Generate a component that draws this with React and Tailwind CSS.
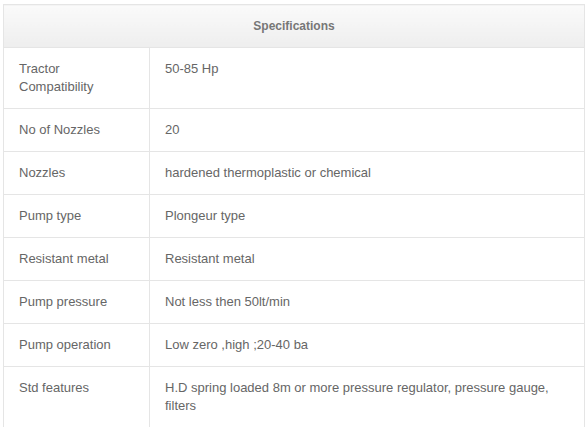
import React from 'react';

const specs = [
  ['Tractor Compatibility', '50-85 Hp'],
  ['No of Nozzles', '20'],
  ['Nozzles', 'hardened thermoplastic or chemical'],
  ['Pump type', 'Plongeur type'],
  ['Resistant metal', 'Resistant metal'],
  ['Pump pressure', 'Not less then 50lt/min'],
  ['Pump operation', 'Low zero ,high ;20-40 ba'],
  ['Std features', 'H.D spring loaded 8m or more pressure regulator, pressure gauge, filters'],
];

export default function App() {
  return (
    <div className="min-h-screen bg-white pt-[4px] pl-[3px] font-['Liberation_Sans',Arial,sans-serif]">
      <table className="w-[582px] border-collapse text-[13px] leading-[18px] text-[#666]">
        <thead>
          <tr>
            <th
              colSpan={2}
              className="h-[43px] border border-[#e5e5e5] bg-gradient-to-b from-[#fafafa] to-[#eeeeee] text-center text-[12px] font-bold text-[#777]"
            >
              Specifications
            </th>
          </tr>
        </thead>
        <tbody>
          {specs.map(([label, value]) => (
            <tr key={label}>
              <td className="w-[146px] border border-[#e5e5e5] px-[15px] py-[12px] align-top font-normal">
                {label}
              </td>
              <td className="border border-[#e5e5e5] px-[15px] py-[12px] align-top">{value}</td>
            </tr>
          ))}
        </tbody>
      </table>
    </div>
  );
}
